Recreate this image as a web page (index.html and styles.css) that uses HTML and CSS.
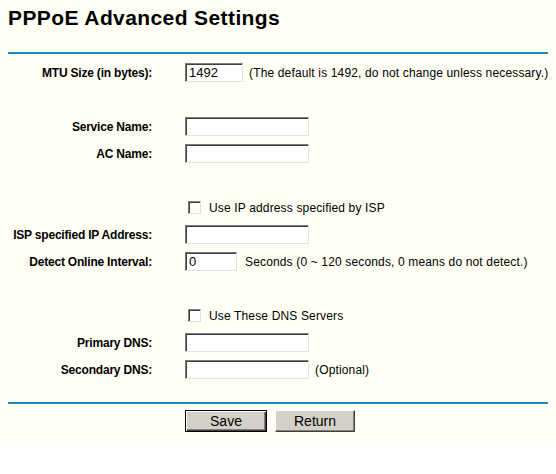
FILE: index.html
```html
<!DOCTYPE html>
<html lang="en">
<head>
    <meta charset="UTF-8">
    <title>PPPoE Advanced Settings</title>
    <link rel="stylesheet" href="styles.css">
</head>
<body>
    <div class="page">
        <h1 class="title">PPPoE Advanced Settings</h1>
        <div class="rule"></div>
        <form class="settings">
            <div class="row">
                <label class="label" for="mtu">MTU Size (in bytes):</label>
                <div class="field">
                    <input type="text" id="mtu" class="box box-mtu" value="1492">
                    <span class="note">(The default is 1492, do not change unless necessary.)</span>
                </div>
            </div>
            <div class="row"></div>
            <div class="row">
                <label class="label" for="service">Service Name:</label>
                <div class="field"><input type="text" id="service" class="box"></div>
            </div>
            <div class="row">
                <label class="label" for="ac">AC Name:</label>
                <div class="field"><input type="text" id="ac" class="box"></div>
            </div>
            <div class="row"></div>
            <div class="row">
                <span class="label"></span>
                <div class="field">
                    <span class="check"></span>
                    <span class="note">Use IP address specified by ISP</span>
                </div>
            </div>
            <div class="row">
                <label class="label" for="ispip">ISP specified IP Address:</label>
                <div class="field"><input type="text" id="ispip" class="box"></div>
            </div>
            <div class="row">
                <label class="label" for="interval">Detect Online Interval:</label>
                <div class="field">
                    <input type="text" id="interval" class="box box-short" value="0">
                    <span class="note">Seconds (0 ~ 120 seconds, 0 means do not detect.)</span>
                </div>
            </div>
            <div class="row"></div>
            <div class="row">
                <span class="label"></span>
                <div class="field">
                    <span class="check"></span>
                    <span class="note">Use These DNS Servers</span>
                </div>
            </div>
            <div class="row">
                <label class="label" for="dns1">Primary DNS:</label>
                <div class="field"><input type="text" id="dns1" class="box"></div>
            </div>
            <div class="row">
                <label class="label" for="dns2">Secondary DNS:</label>
                <div class="field">
                    <input type="text" id="dns2" class="box">
                    <span class="note">(Optional)</span>
                </div>
            </div>
        </form>
        <div class="rule rule-bottom"></div>
        <div class="buttons">
            <button type="button" class="btn btn-default">Save</button>
            <button type="button" class="btn">Return</button>
        </div>
    </div>
</body>
</html>
```

FILE: styles.css
```css
body {
    margin: 0;
    padding: 0;
    background-color: #ffffff;
    font-family: "Liberation Sans", Arial, sans-serif;
    font-size: 12px;
    color: #000;
}
.page {
    background-color: #fffff6;
    padding: 6px 8px 10px;
    height: 426px;
}
.title {
    margin: 0 0 22px;
    font-size: 21px;
    line-height: 24px;
    letter-spacing: 0.4px;
    font-weight: bold;
}
.rule {
    height: 2px;
    background-color: #1a8dbd;
}
.settings {
    margin: 5px 0 0;
}
.row {
    display: flex;
    align-items: center;
    height: 27px;
}
.label {
    width: 144px;
    flex: none;
    text-align: right;
    font-weight: bold;
    letter-spacing: -0.2px;
    margin-right: 33px;
}
.field {
    display: flex;
    align-items: center;
    flex: none;
    white-space: nowrap;
}
.box {
    width: 124px;
    height: 19px;
    box-sizing: border-box;
    margin: 0;
    padding: 1px 3px;
    font-family: "Liberation Sans", Arial, sans-serif;
    font-size: 13px;
    background: #fff;
    border: 1px solid;
    border-color: #7a7a7a #e4e2dc #e4e2dc #7a7a7a;
    box-shadow: inset 1px 1px 0 #404040;
    outline: none;
}
.box-mtu {
    width: 58px;
}
.box-short {
    width: 52px;
}
.note {
    margin-left: 6px;
    letter-spacing: 0.15px;
}
.box-short + .note {
    margin-left: 8px;
}
.check {
    width: 13px;
    height: 13px;
    box-sizing: border-box;
    margin-left: 3px;
    margin-right: 2px;
    background: #fff;
    border: 1px solid;
    border-color: #808080 #e4e2dc #e4e2dc #808080;
    box-shadow: inset 1px 1px 0 #404040;
}
.rule-bottom {
    margin-top: 19px;
}
.buttons {
    display: flex;
    justify-content: flex-start;
    padding-left: 177px;
    margin-top: 6px;
}
.btn {
    width: 80px;
    height: 22px;
    margin-right: 8px;
    padding: 0;
    font-family: "Liberation Sans", Arial, sans-serif;
    font-size: 14px;
    background-color: #d4d0c8;
    border: 1px solid;
    border-color: #fff #404040 #404040 #fff;
    box-shadow: inset -1px -1px 0 #808080;
    cursor: pointer;
}
.btn-default {
    width: 82px;
    border: 1px solid #000;
    box-shadow: inset 1px 1px 0 #fff, inset -1px -1px 0 #404040, inset -2px -2px 0 #808080;
}
```
